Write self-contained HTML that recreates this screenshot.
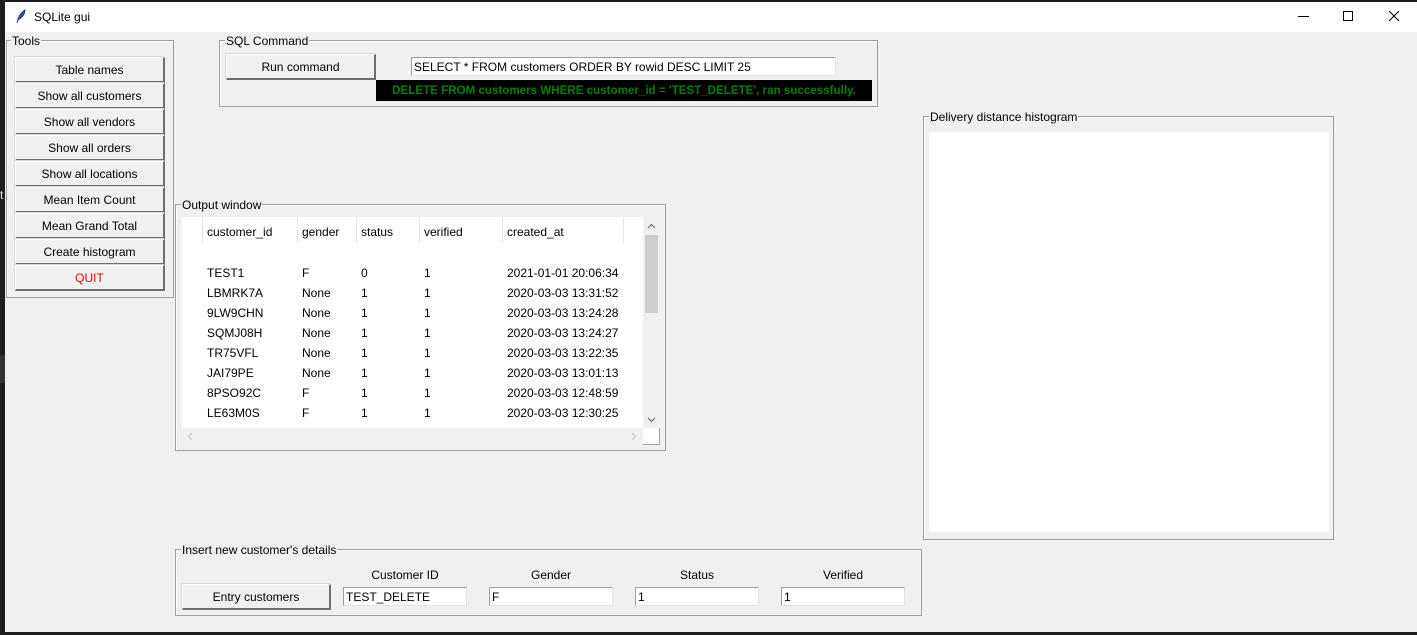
<!DOCTYPE html>
<html><head><meta charset="utf-8"><style>
*{margin:0;padding:0;box-sizing:border-box}
body{width:1417px;height:635px;background:#1e1e1e;position:relative;overflow:hidden;font-family:"Liberation Sans",sans-serif;font-size:12px;color:#000}
.a{position:absolute}
.win{left:5px;top:2px;width:1412px;height:630px;background:#f0f0f0}
.title{left:5px;top:2px;width:1412px;height:30px;background:#fff}
.fr{position:absolute;border:1px solid #a0a0a0;box-shadow:1px 1px 0 #fff inset}
.lbl{position:absolute;background:#f0f0f0;padding:0 1px;line-height:13px}
.btn{position:absolute;background:#f0f0f0;border-top:1px solid #fff;border-left:1px solid #fff;border-right:2px solid #6e6e6e;border-bottom:2px solid #6e6e6e;text-align:center;line-height:24px;box-shadow:-1px -1px 0 #d8d8d8}
.ent{position:absolute;background:#fff;border-top:1px solid #a0a0a0;border-left:1px solid #a0a0a0;border-bottom:1px solid #e3e3e3;border-right:1px solid #e3e3e3;padding-left:2px;line-height:18px}
.sep{position:absolute;top:217px;height:26px;width:1px;background:#e5e5e5}
.t{position:absolute;line-height:14px;margin-top:1px}
</style></head><body>
<div class="a win"></div>
<div class="a title"></div>
<div class="a" style="left:0;top:0;width:1417px;height:2px;background:#1e1e1e"></div>
<svg class="a" style="left:15px;top:9px" width="12" height="15" viewBox="0 0 12 15"><path d="M2 14 C3 9 5 4 10 1 C10 5 7 9 3 11 Z" fill="#3a5ea8" stroke="#1a2a5a" stroke-width="0.8"/></svg>
<div class="a" style="left:34px;top:10px;font-size:12px">SQLite gui</div>
<div class="a" style="left:1298px;top:16px;width:11px;height:1px;background:#000"></div>
<div class="a" style="left:1343px;top:11px;width:10px;height:10px;border:1px solid #000"></div>
<svg class="a" style="left:1388px;top:10px" width="12" height="12"><path d="M1 1L11 11M11 1L1 11" stroke="#000" stroke-width="1"/></svg>
<div class="a" style="left:0;top:32px;width:5px;height:600px;background:#1e1e1e"></div>
<div class="a" style="left:0;top:188px;color:#ddd;font-size:12px">t</div>
<div class="a" style="left:0;top:355px;width:5px;height:28px;background:#333"></div>

<div class="fr" style="left:6px;top:40px;width:168px;height:258px"></div>
<div class="lbl" style="left:11px;top:35px">Tools</div>
<div class="btn" style="left:15px;top:57px;width:150px;height:26px">Table names</div>
<div class="btn" style="left:15px;top:83px;width:150px;height:26px">Show all customers</div>
<div class="btn" style="left:15px;top:109px;width:150px;height:26px">Show all vendors</div>
<div class="btn" style="left:15px;top:135px;width:150px;height:26px">Show all orders</div>
<div class="btn" style="left:15px;top:161px;width:150px;height:26px">Show all locations</div>
<div class="btn" style="left:15px;top:187px;width:150px;height:26px">Mean Item Count</div>
<div class="btn" style="left:15px;top:213px;width:150px;height:26px">Mean Grand Total</div>
<div class="btn" style="left:15px;top:239px;width:150px;height:26px">Create histogram</div>
<div class="btn" style="left:15px;top:265px;width:150px;height:26px;color:#f00">QUIT</div>

<div class="fr" style="left:219px;top:40px;width:659px;height:67px"></div>
<div class="lbl" style="left:225px;top:35px">SQL Command</div>
<div class="btn" style="left:226px;top:54px;width:150px;height:26px">Run command</div>
<div class="ent" style="left:411px;top:57px;width:425px;height:19px">SELECT * FROM customers ORDER BY rowid DESC LIMIT 25</div>
<div class="a" style="left:376px;top:80px;width:496px;height:21px;background:#000;color:#008000;font-weight:bold;text-align:center;line-height:22px;font-size:11.6px">DELETE FROM customers WHERE customer_id = 'TEST_DELETE', ran successfully.</div>

<div class="fr" style="left:175px;top:204px;width:491px;height:247px"></div>
<div class="lbl" style="left:181px;top:199px">Output window</div>
<div class="a" style="left:182px;top:217px;width:461px;height:211px;background:#fff"></div>
<div class="sep" style="left:202px"></div><div class="sep" style="left:297px"></div><div class="sep" style="left:356px"></div><div class="sep" style="left:419px"></div><div class="sep" style="left:502px"></div><div class="sep" style="left:623px"></div>
<div class="t" style="left:207px;top:224px">customer_id</div><div class="t" style="left:302px;top:224px">gender</div><div class="t" style="left:361px;top:224px">status</div><div class="t" style="left:424px;top:224px">verified</div><div class="t" style="left:507px;top:224px">created_at</div>
<div class="a" style="left:643px;top:217px;width:17px;height:211px;background:#f0f0f0"></div>
<div class="a" style="left:645px;top:235px;width:13px;height:78px;background:#cdcdcd"></div>
<svg class="a" style="left:647px;top:223px" width="9" height="6"><path d="M1 5L4.5 1.5L8 5" stroke="#606060" fill="none"/></svg>
<svg class="a" style="left:647px;top:417px" width="9" height="6"><path d="M1 1L4.5 4.5L8 1" stroke="#606060" fill="none"/></svg>
<div class="a" style="left:182px;top:428px;width:461px;height:17px;background:#f0f0f0"></div>
<svg class="a" style="left:187px;top:432px" width="6" height="9"><path d="M5 1L1.5 4.5L5 8" stroke="#c0c0c0" fill="none"/></svg>
<svg class="a" style="left:631px;top:432px" width="6" height="9"><path d="M1 1L4.5 4.5L1 8" stroke="#c0c0c0" fill="none"/></svg>
<div class="a" style="left:643px;top:428px;width:17px;height:17px;background:#fff;border-right:1px solid #a0a0a0;border-bottom:1px solid #a0a0a0"></div>
<div class="t" style="left:207px;top:265px">TEST1</div><div class="t" style="left:302px;top:265px">F</div><div class="t" style="left:361px;top:265px">0</div><div class="t" style="left:424px;top:265px">1</div><div class="t" style="left:507px;top:265px">2021-01-01 20:06:34</div>
<div class="t" style="left:207px;top:285px">LBMRK7A</div><div class="t" style="left:302px;top:285px">None</div><div class="t" style="left:361px;top:285px">1</div><div class="t" style="left:424px;top:285px">1</div><div class="t" style="left:507px;top:285px">2020-03-03 13:31:52</div>
<div class="t" style="left:207px;top:305px">9LW9CHN</div><div class="t" style="left:302px;top:305px">None</div><div class="t" style="left:361px;top:305px">1</div><div class="t" style="left:424px;top:305px">1</div><div class="t" style="left:507px;top:305px">2020-03-03 13:24:28</div>
<div class="t" style="left:207px;top:325px">SQMJ08H</div><div class="t" style="left:302px;top:325px">None</div><div class="t" style="left:361px;top:325px">1</div><div class="t" style="left:424px;top:325px">1</div><div class="t" style="left:507px;top:325px">2020-03-03 13:24:27</div>
<div class="t" style="left:207px;top:345px">TR75VFL</div><div class="t" style="left:302px;top:345px">None</div><div class="t" style="left:361px;top:345px">1</div><div class="t" style="left:424px;top:345px">1</div><div class="t" style="left:507px;top:345px">2020-03-03 13:22:35</div>
<div class="t" style="left:207px;top:365px">JAI79PE</div><div class="t" style="left:302px;top:365px">None</div><div class="t" style="left:361px;top:365px">1</div><div class="t" style="left:424px;top:365px">1</div><div class="t" style="left:507px;top:365px">2020-03-03 13:01:13</div>
<div class="t" style="left:207px;top:385px">8PSO92C</div><div class="t" style="left:302px;top:385px">F</div><div class="t" style="left:361px;top:385px">1</div><div class="t" style="left:424px;top:385px">1</div><div class="t" style="left:507px;top:385px">2020-03-03 12:48:59</div>
<div class="t" style="left:207px;top:405px">LE63M0S</div><div class="t" style="left:302px;top:405px">F</div><div class="t" style="left:361px;top:405px">1</div><div class="t" style="left:424px;top:405px">1</div><div class="t" style="left:507px;top:405px">2020-03-03 12:30:25</div>

<div class="fr" style="left:923px;top:116px;width:411px;height:424px"></div>
<div class="lbl" style="left:929px;top:111px">Delivery distance histogram</div>
<div class="a" style="left:929px;top:132px;width:400px;height:400px;background:#fff"></div>

<div class="fr" style="left:175px;top:549px;width:747px;height:67px"></div>
<div class="lbl" style="left:181px;top:544px">Insert new customer's details</div>
<div class="t" style="left:343px;top:567px;width:124px;text-align:center">Customer ID</div>
<div class="t" style="left:489px;top:567px;width:124px;text-align:center">Gender</div>
<div class="t" style="left:635px;top:567px;width:124px;text-align:center">Status</div>
<div class="t" style="left:781px;top:567px;width:124px;text-align:center">Verified</div>
<div class="btn" style="left:182px;top:584px;width:149px;height:26px">Entry customers</div>
<div class="ent" style="left:343px;top:587px;width:124px;height:19px">TEST_DELETE</div>
<div class="ent" style="left:489px;top:587px;width:124px;height:19px">F</div>
<div class="ent" style="left:635px;top:587px;width:124px;height:19px">1</div>
<div class="ent" style="left:781px;top:587px;width:124px;height:19px">1</div>
<div class="a" style="left:0;top:632px;width:1417px;height:3px;background:#1e1e1e"></div>
</body></html>
